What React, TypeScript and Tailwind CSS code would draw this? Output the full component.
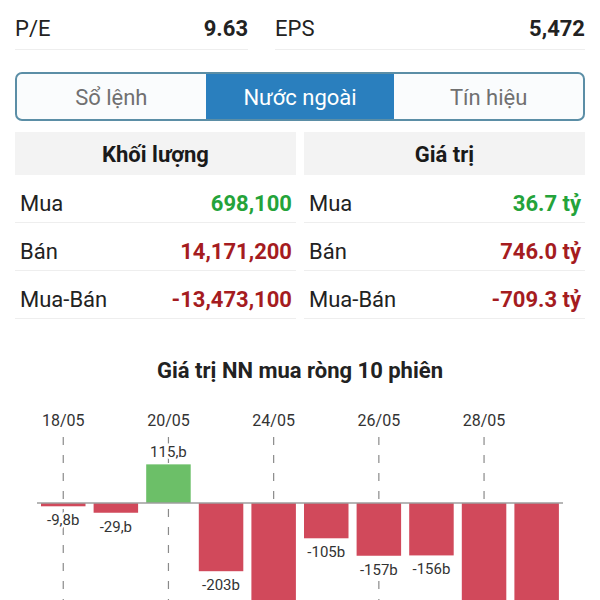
import React from 'react'

const bars = [
  { v: -9.8, label: '-9,8b' },
  { v: -29, label: '-29,b' },
  { v: 115, label: '115,b' },
  { v: -203, label: '-203b' },
  { v: -340, label: '' },
  { v: -105, label: '-105b' },
  { v: -157, label: '-157b' },
  { v: -156, label: '-156b' },
  { v: -330, label: '' },
  { v: -320, label: '' },
]

const dates = ['18/05', '20/05', '24/05', '26/05', '28/05']

const BASE = 503
const K = 0.336
const START = 41
const PITCH = 52.6
const BAR_W = 44.5

function Chart() {
  const centers = bars.map((_, i) => START + i * PITCH + BAR_W / 2)
  return (
    <svg width={600} height={217} viewBox="0 383 600 217" style={{ fontFamily: 'Roboto, sans-serif' }}>
      {dates.map((d, i) => {
        const x = centers[i * 2]
        return (
          <g key={d}>
            <text x={x} y={426} textAnchor="middle" fontSize={16} fill="#333333">
              {d}
            </text>
            <line x1={x} y1={437} x2={x} y2={600} stroke="#8a8a8a" strokeWidth={1.2} strokeDasharray="8 10" />
          </g>
        )
      })}
      {bars.map((b, i) => {
        const h = Math.abs(b.v) * K
        const x = START + i * PITCH
        const pos = b.v > 0
        return (
          <rect
            key={i}
            x={x}
            y={pos ? BASE - h : BASE}
            width={BAR_W}
            height={h}
            fill={pos ? '#6cbf68' : '#d1495b'}
          />
        )
      })}
      <line x1={37} y1={BASE} x2={563} y2={BASE} stroke="#9e9e9e" strokeWidth={1.5} />
      {bars.map((b, i) => {
        if (!b.label) return null
        const h = Math.abs(b.v) * K
        const y = b.v > 0 ? BASE - h - 7 : BASE + h + 19
        return (
          <text
            key={'l' + i}
            x={centers[i]}
            y={y}
            textAnchor="middle"
            fontSize={15}
            fill="#333333"
            stroke="#ffffff"
            strokeWidth={5}
            paintOrder="stroke"
          >
            {b.label}
          </text>
        )
      })}
    </svg>
  )
}

function Row({ label, value, color }: { label: string; value: string; color: string }) {
  return (
    <div className="h-[48px] flex items-center justify-between pl-[5px] pr-[4px] pt-[10px] border-b border-[#eeeeee]">
      <span className="text-[#222222]">{label}</span>
      <span className={`font-bold ${color}`}>{value}</span>
    </div>
  )
}

export default function App() {
  return (
    <div className="w-[600px] h-[600px] overflow-hidden bg-white text-[22px] leading-none" style={{ fontFamily: 'Roboto, "Noto Sans", sans-serif' }}>
      <div className="flex px-[15px]">
        <div className="w-[233px] h-[50px] flex items-center justify-between pt-[8px] border-b border-[#eeeeee] text-[#222222]">
          <span>P/E</span>
          <span className="font-bold">9.63</span>
        </div>
        <div className="ml-[27px] w-[310px] h-[50px] flex items-center justify-between pt-[8px] border-b border-[#eeeeee] text-[#222222]">
          <span>EPS</span>
          <span className="font-bold">5,472</span>
        </div>
      </div>

      <div className="mx-[15px] mt-[22px] h-[49px] grid grid-cols-3 border-2 border-[#5b8ea6] rounded-[7px] overflow-hidden bg-[#fafcfd]">
        <div className="flex items-center justify-center pt-[3px] text-[#707070]">Sổ lệnh</div>
        <div className="flex items-center justify-center pt-[3px] bg-[#2a7fbe] text-white">Nước ngoài</div>
        <div className="flex items-center justify-center pt-[3px] text-[#707070]">Tín hiệu</div>
      </div>

      <div className="mt-[11px] px-[15px] grid grid-cols-2 gap-[8px]">
        <div>
          <div className="h-[43px] bg-[#f3f3f3] flex items-center justify-center pt-[2px] font-bold text-[#1a1a1a]">Khối lượng</div>
          <Row label="Mua" value="698,100" color="text-[#24a33a]" />
          <Row label="Bán" value="14,171,200" color="text-[#a51c1f]" />
          <Row label="Mua-Bán" value="-13,473,100" color="text-[#a51c1f]" />
        </div>
        <div>
          <div className="h-[43px] bg-[#f3f3f3] flex items-center justify-center pt-[2px] font-bold text-[#1a1a1a]">Giá trị</div>
          <Row label="Mua" value="36.7 tỷ" color="text-[#24a33a]" />
          <Row label="Bán" value="746.0 tỷ" color="text-[#a51c1f]" />
          <Row label="Mua-Bán" value="-709.3 tỷ" color="text-[#a51c1f]" />
        </div>
      </div>

      <div className="mt-[40px] h-[24px] flex items-center justify-center font-bold text-[22px] text-[#222222]">
        Giá trị NN mua ròng 10 phiên
      </div>
      <Chart />
    </div>
  )
}
